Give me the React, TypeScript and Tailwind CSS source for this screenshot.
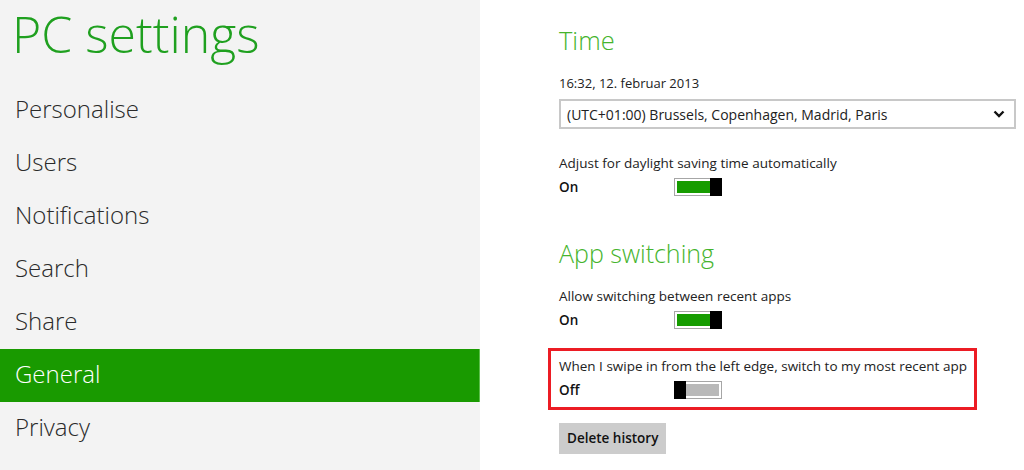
import React from 'react'

const NAV = ['Personalise', 'Users', 'Notifications', 'Search', 'Share', 'General', 'Privacy']

function Toggle({ on }: { on: boolean }) {
  return (
    <div className="relative w-[48px] h-[18px]">
      <div className="absolute inset-0 border border-[#a6a6a6] bg-white p-[2px]">
        <div className={`w-full h-full ${on ? 'bg-[#169c00]' : 'bg-[#b9b9b9]'}`} />
      </div>
      <div className={`absolute top-0 bottom-0 w-[12px] bg-black ${on ? 'right-0' : 'left-0'}`} />
    </div>
  )
}

function SwitchRow({ label, on }: { label: string; on: boolean }) {
  return (
    <div>
      <p className="text-[13.5px] leading-[20px] text-[#222] whitespace-nowrap">{label}</p>
      <div className="flex items-center mt-[4px] h-[20px]">
        <span className="w-[115px] text-[13.5px] font-semibold text-[#111]">{on ? 'On' : 'Off'}</span>
        <Toggle on={on} />
      </div>
    </div>
  )
}

export default function App() {
  return (
    <div className="w-[1024px] h-[470px] flex overflow-hidden bg-white" style={{ fontFamily: '"Open Sans", "Noto Sans", sans-serif' }}>
      {/* ── Navigation ── */}
      <div className="w-[480px] flex-shrink-0 bg-[#f3f3f3] flex flex-col">
        <div className="h-[84px] pl-[12px]">
          <h1 className="text-[50px] leading-[68px] font-light text-[#1fa01f]">PC settings</h1>
        </div>
        {NAV.map(n => (
          <div key={n}
            className={`h-[53px] flex items-center pl-[15px] pb-[4px] text-[24px] font-light ${n === 'General' ? 'bg-[#199a00] text-white border-r border-[#5cbf4a]' : 'text-[#2a2a2a]'}`}>
            {n}
          </div>
        ))}
      </div>

      {/* ── Contenu ── */}
      <div className="flex-1 pl-[79px] pr-[8px]">
        <h2 className="mt-[22px] text-[25.5px] leading-[36px] font-light text-[#45b42d]">Time</h2>
        <p className="mt-[15px] text-[13px] leading-[20px] text-[#222]">16:32, 12. februar 2013</p>
        <div className="mt-[6px] h-[30px] border-2 border-[#c8c8c8] flex items-center justify-between pl-[6px] pr-[9px]">
          <span className="text-[14px] text-[#222]">(UTC+01:00) Brussels, Copenhagen, Madrid, Paris</span>
          <svg width="12" height="8" viewBox="0 0 12 8">
            <path d="M1.5 1.5 L6 6 L10.5 1.5" fill="none" stroke="#111" strokeWidth="2.4" />
          </svg>
        </div>
        <div className="mt-[24px]">
          <SwitchRow label="Adjust for daylight saving time automatically" on />
        </div>

        <h2 className="mt-[38px] text-[25px] leading-[36px] font-light text-[#45b42d]">App switching</h2>
        <div className="mt-[15px]">
          <SwitchRow label="Allow switching between recent apps" on />
        </div>

        <div className="mt-[18px] ml-[-11px] w-[429px] border-[3px] border-[#ec1c24] pl-[8px] pt-[5px] pb-[7px]">
          <SwitchRow label="When I swipe in from the left edge, switch to my most recent app" on={false} />
        </div>

        <button className="mt-[13px] h-[31px] px-[8px] bg-[#cccccc] text-[13.5px] font-semibold text-[#111]">Delete history</button>
      </div>
    </div>
  )
}
